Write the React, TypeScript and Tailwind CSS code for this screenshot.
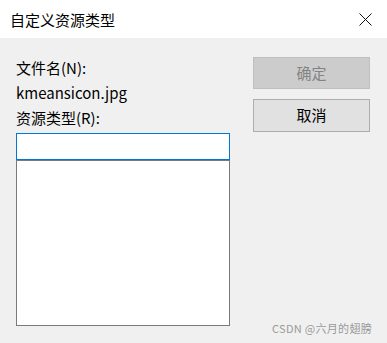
const font = { fontFamily: '"Noto Sans CJK SC", "Noto Sans", sans-serif' };

const CloseIcon = () => (
  <svg width="13" height="13" viewBox="0 0 13 13" fill="none" stroke="#111" strokeWidth="1">
    <path d="M0.5 0.5 L12.5 12.5 M12.5 0.5 L0.5 12.5" />
  </svg>
);

const App = () => {
  return (
    <div
      className="relative w-[387px] h-[343px] bg-[#f0f0f0] text-black overflow-hidden"
      style={font}
    >
      {/* title bar */}
      <div className="h-[38px] bg-white flex items-center justify-between pl-[10px] pr-[15px]">
        <span className="text-[15px] leading-none">自定义资源类型</span>
        <CloseIcon />
      </div>

      {/* body */}
      <div className="flex pl-[16px] pt-[17px]">
        <div className="w-[214px] flex flex-col text-[15px] leading-[25px]">
          <span>文件名(N):</span>
          <span>kmeansicon.jpg</span>
          <span>资源类型(R):</span>
          <div className="mt-[3px] h-[27px] bg-white border border-[#0078d7]" />
          <div className="h-[166px] bg-white border border-[#7a7a7a]" />
        </div>

        <div className="ml-[23px] mt-[2px] flex flex-col gap-[10px] w-[117px]">
          <button className="h-[32px] bg-[#cccccc] border border-[#bfbfbf] text-[15px] text-[#838383]">
            确定
          </button>
          <button className="h-[33px] bg-[#e1e1e1] border border-[#adadad] text-[15px] text-black">
            取消
          </button>
        </div>
      </div>

      <span className="absolute right-[15px] bottom-[9px] text-[11px] leading-none text-[#9a9a9a] tracking-[0.3px]">
        CSDN @六月的翅膀
      </span>
    </div>
  );
};

export default App;
